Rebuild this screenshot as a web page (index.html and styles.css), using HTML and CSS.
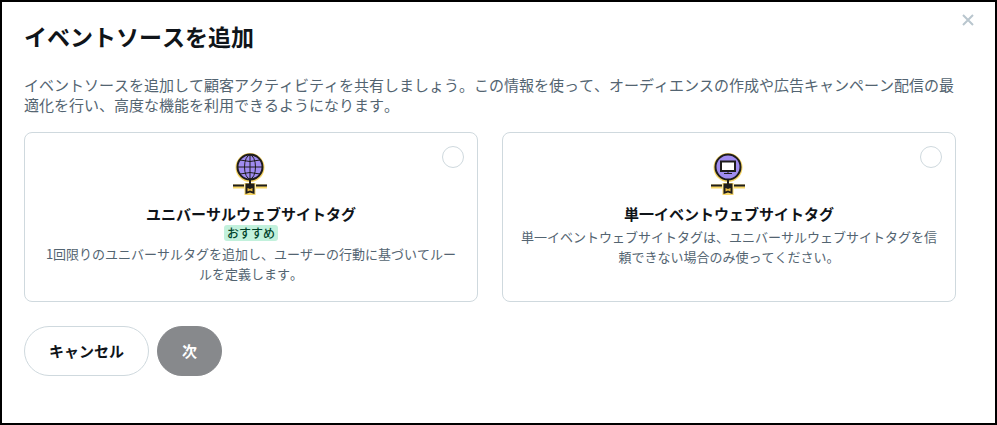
FILE: index.html
```html
<!DOCTYPE html>
<html lang="ja">
<head>
    <meta charset="UTF-8">
    <meta name="viewport" content="width=device-width, initial-scale=1">
    <title>イベントソースを追加</title>
    <link rel="stylesheet" href="styles.css">
</head>
<body>
<main class="dialog">
    <button class="close" type="button" aria-label="閉じる">
        <svg width="12" height="12" viewBox="0 0 12 12">
            <path d="M1 1l10 10M11 1L1 11"/>
        </svg>
    </button>
    <h1>イベントソースを追加</h1>
    <p class="intro">イベントソースを追加して顧客アクティビティを共有しましょう。この情報を使って、オーディエンスの作成や広告キャンペーン配信の最適化を行い、高度な機能を利用できるようになります。</p>
    <form>
        <div class="options">
            <label class="option">
                <input type="radio" name="source" value="universal">
                <svg class="icon" width="40" height="44" viewBox="0 0 40 44">
                    <g class="glow">
                        <circle cx="19" cy="16.500" r="12.500"/>
                        <path d="M2 35.500h11M25 35.500h11M15.500 34h7v9l-3.500-1-3.500 1z"/>
                    </g>
                    <circle class="disc" cx="19" cy="16" r="12.500"/>
                    <g class="grid">
                        <ellipse cx="19" cy="16" rx="5.500" ry="12"/>
                        <path d="M19 4v24M7 16h24M9 9q10 3 20 0M9 23q10-3 20 0"/>
                    </g>
                    <path class="line" d="M19 28v6M2 34.500h11M25 34.500h11"/>
                    <path class="tag" d="M14.500 32.500h9v10.500l-4.500-1.500-4.500 1.500z"/>
                    <path class="spark" d="M16.500 37l2.500 1 2.500-1v3.500l-2.500-1-2.500 1z"/>
                </svg>
                <span class="name">ユニバーサルウェブサイトタグ</span>
                <span class="badge">おすすめ</span>
                <span class="text">1回限りのユニバーサルタグを追加し、ユーザーの行動に基づいてルールを定義します。</span>
            </label>
            <label class="option">
                <input type="radio" name="source" value="single">
                <svg class="icon" width="40" height="44" viewBox="0 0 40 44">
                    <g class="glow">
                        <circle cx="19" cy="16.500" r="12.500"/>
                        <path d="M2 35.500h11M25 35.500h11M15.500 34h7v9l-3.500-1-3.500 1z"/>
                    </g>
                    <circle class="disc" cx="19" cy="16" r="12.500"/>
                    <rect class="screen" x="12" y="10.500" width="14" height="9.500"/>
                    <path class="grid" d="M19 20v2.500M15 22.500h8"/>
                    <path class="line" d="M19 28v6M2 34.500h11M25 34.500h11"/>
                    <path class="tag" d="M14.500 32.500h9v10.500l-4.500-1.500-4.500 1.500z"/>
                    <path class="spark" d="M16.500 37l2.500 1 2.500-1v3.500l-2.500-1-2.500 1z"/>
                </svg>
                <span class="name">単一イベントウェブサイトタグ</span>
                <span class="text">単一イベントウェブサイトタグは、ユニバーサルウェブサイトタグを信頼できない場合のみ使ってください。</span>
            </label>
        </div>
        <div class="actions">
            <button class="btn" type="button">キャンセル</button>
            <button class="btn btn-next" type="submit" disabled>次</button>
        </div>
    </form>
</main>
</body>
</html>
```
FILE: styles.css
```css
* {
    box-sizing: border-box;
}

body {
    margin: 0;
    font-family: "Noto Sans CJK JP", sans-serif;
    font-kerning: none;
    color: #0f1419;
    background-color: #fff;
}

.dialog {
    position: relative;
    min-height: 100vh;
    padding: 20px 39px 24px 22px;
    border: 2px solid #000;
}

h1 {
    margin: 0 0 25px;
    font-size: 23px;
    line-height: 28px;
    font-weight: 700;
}

.close {
    position: absolute;
    top: 12px;
    right: 21px;
    display: flex;
    padding: 0;
    border: 0;
    background: none;
}

.close path {
    stroke: #b9c6ce;
    stroke-width: 2;
}

.intro {
    margin: 0 0 17px;
    font-size: 15px;
    line-height: 20px;
    font-weight: 400;
    color: #536471;
}

.options {
    display: grid;
    grid-template-columns: 1fr 1fr;
    gap: 24px;
}

.option {
    position: relative;
    display: flex;
    flex-direction: column;
    align-items: center;
    min-height: 170px;
    padding: 18px 16px 16px;
    border: 1px solid #cfd9de;
    border-radius: 8px;
    text-align: center;
}

.option input {
    position: absolute;
    top: 13px;
    right: 13px;
    width: 22px;
    height: 22px;
    margin: 0;
    border: 1px solid #cfd9de;
    border-radius: 50%;
    appearance: none;
}

.option input:checked {
    border: 6px solid #0f1419;
}

.name {
    margin-top: 9px;
    font-size: 15px;
    line-height: 20px;
    font-weight: 700;
}

.badge {
    margin-top: 1px;
    padding: 0 3px;
    border-radius: 3px;
    font-size: 12px;
    line-height: 16px;
    font-weight: 500;
    color: #00432a;
    background-color: #c2f1dc;
}

.text {
    margin-top: 3px;
    font-size: 13px;
    line-height: 20px;
    font-weight: 400;
    color: #536471;
}

.icon {
    fill: none;
}

.glow {
    stroke: #f7d666;
    stroke-width: 4;
}

.disc {
    fill: #a08cf0;
    stroke: #1f1d1c;
    stroke-width: 2;
}

.grid {
    stroke: #1f1d1c;
    stroke-width: 1;
}

.line {
    stroke: #1f1d1c;
    stroke-width: 2;
}

.screen {
    fill: #fff;
    stroke: #1f1d1c;
    stroke-width: 2;
}

.tag {
    fill: #1f1d1c;
}

.spark {
    fill: #e8b93c;
}

.actions {
    display: flex;
    gap: 8px;
    margin-top: 24px;
}

.btn {
    padding: 14px 24px;
    border: 1px solid #cfd9de;
    border-radius: 25px;
    font-family: inherit;
    font-size: 15px;
    line-height: 20px;
    font-weight: 700;
    color: #0f1419;
    background-color: #fff;
}

.btn-next {
    border-color: #87898c;
    color: #fff;
    background-color: #87898c;
}
```
